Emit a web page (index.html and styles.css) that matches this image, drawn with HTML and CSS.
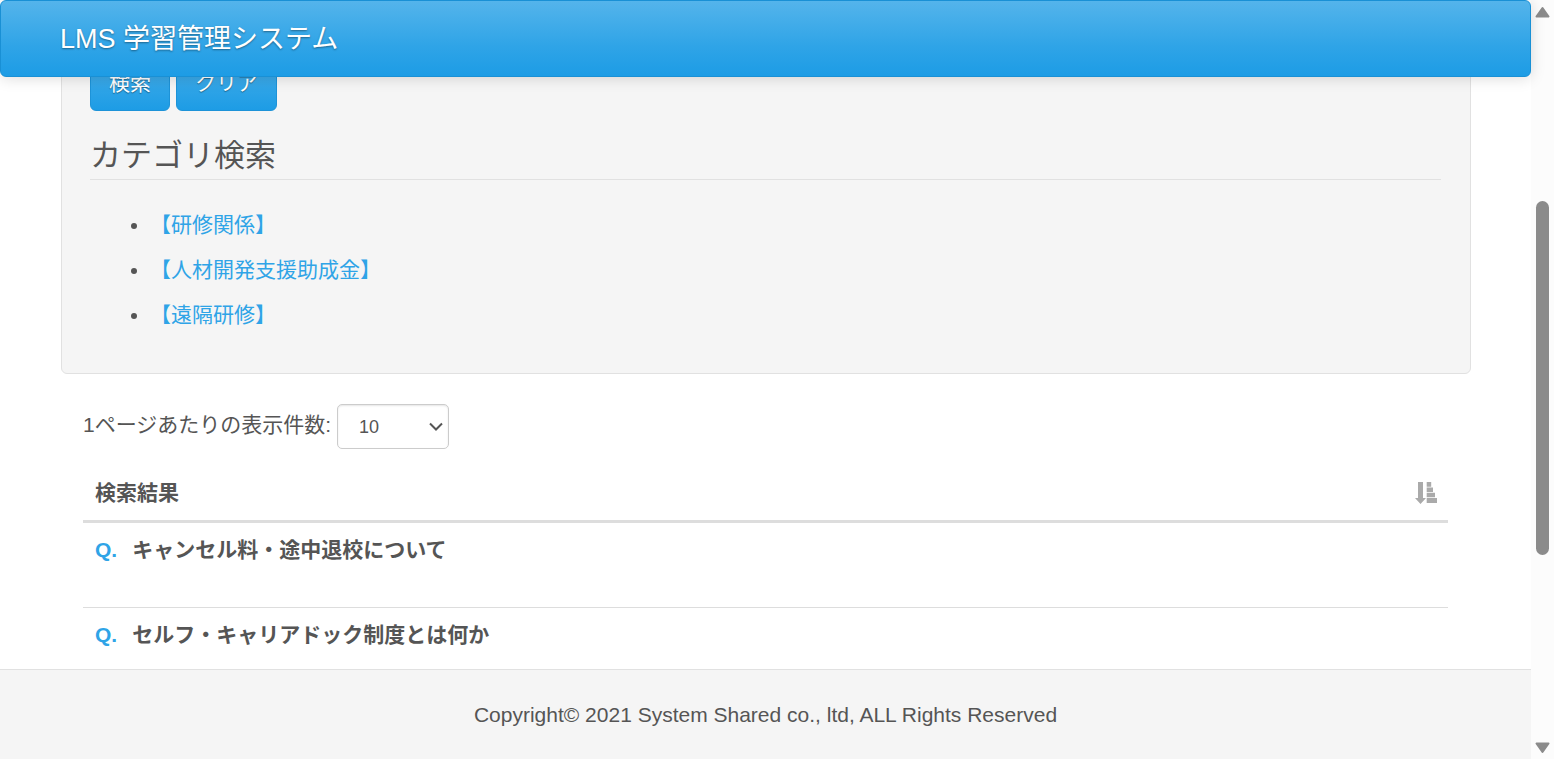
FILE: index.html
```html
<!DOCTYPE html>
<html lang="ja">
<head>
<meta charset="utf-8">
<title>LMS 学習管理システム</title>
<link rel="stylesheet" href="styles.css">
</head>
<body>
<div class="page">
  <header class="navbar"><a class="brand" href="#">LMS 学習管理システム</a></header>
  <main class="content">
    <section class="well">
      <div class="actions">
        <button class="btn" type="submit">検索</button>
        <button class="btn" type="reset">クリア</button>
      </div>
      <h2 class="legend">カテゴリ検索</h2>
      <ul class="categories">
        <li><a href="#">【研修関係】</a></li>
        <li><a href="#">【人材開発支援助成金】</a></li>
        <li><a href="#">【遠隔研修】</a></li>
      </ul>
    </section>
    <section class="results">
      <div class="length">
        <label for="page-size">1ページあたりの表示件数:</label>
        <div class="select-box">
          <select id="page-size" class="select">
            <option selected>10</option>
            <option>25</option>
            <option>50</option>
          </select>
          <svg class="chevron" viewBox="0 0 14 10" aria-hidden="true"><path d="M1 1.500L7 7.500 13 1.500"/></svg>
        </div>
      </div>
      <table class="table">
        <thead>
          <tr><th scope="col"><div class="heading"><span>検索結果</span>
            <svg class="sort" viewBox="0 0 22 22" aria-hidden="true"><path d="M3 0h5v16h3l-5.500 6L0 16h3zM11.700 0h4.500v4.800h-4.500zM11.700 5.500h6.300v4.500h-6.300zM11.700 10.700h8.300v4.500h-8.300zM11.700 16h10.300v5h-10.300z"/></svg>
          </div></th></tr>
        </thead>
        <tbody>
          <tr><td><span class="q">Q.</span>キャンセル料・途中退校について</td></tr>
          <tr><td><span class="q">Q.</span>セルフ・キャリアドック制度とは何か</td></tr>
        </tbody>
      </table>
    </section>
  </main>
  <footer class="footer">Copyright© 2021 System Shared co., ltd, ALL Rights Reserved</footer>
</div>
<div class="scrollbar" aria-hidden="true">
  <svg class="arrow" viewBox="0 0 15 12"><path d="M7.500 2L13.500 10.500H1.500z"/></svg>
  <div class="track"><div class="thumb"></div></div>
  <svg class="arrow" viewBox="0 0 15 12"><path d="M7.500 10L1.500 1.500h12z"/></svg>
</div>
</body>
</html>
```

FILE: styles.css
```css
* {
  box-sizing: border-box;
}

body {
  margin: 0;
  height: 100vh;
  display: flex;
  overflow: hidden;
  background: #fff;
  color: #555;
  font-family: "Liberation Sans", "Noto Sans CJK JP", sans-serif;
  font-size: 21px;
  line-height: 30px;
}

a {
  color: #2fa4e7;
  text-decoration: none;
}

.page {
  position: relative;
  flex: 1;
  min-width: 0;
  display: flex;
  flex-direction: column;
}

.navbar {
  position: absolute;
  top: 0;
  left: 0;
  right: 0;
  padding: 23px 59px 21px;
  border: 1px solid #1990d5;
  border-radius: 6px;
  background: linear-gradient(#54b4eb, #2fa4e7 60%, #1d9ce5);
  box-shadow: 0 1px 15px rgba(0, 0, 0, 0.15);
}

.brand {
  display: block;
  color: #fff;
  font-size: 27px;
  line-height: 31px;
  text-shadow: 0 1px 2px rgba(0, 0, 0, 0.4);
}

.content {
  flex: 1;
  min-height: 0;
  overflow: hidden;
  padding: 0 60px 0 61px;
}

.well {
  padding: 53px 29px 28px 28px;
  border: 1px solid #e1e1e1;
  border-radius: 6px;
  background: #f5f5f5;
}

.actions {
  display: flex;
  gap: 6px;
}

.btn {
  height: 57px;
  padding: 0 18px;
  border: 1px solid #1d93d8;
  border-radius: 6px;
  background: linear-gradient(#54b4eb, #2fa4e7 60%, #1d9ce5);
  color: #fff;
  font: inherit;
  line-height: 30px;
  text-shadow: 0 1px 1px rgba(0, 0, 0, 0.4);
}

.legend {
  margin: 22px 0 30px;
  border-bottom: 1px solid #e1e1e1;
  font-size: 31px;
  font-weight: 400;
  line-height: 46px;
}

.categories {
  margin: 0;
  padding: 0 0 0 60px;
}

.categories li {
  margin-bottom: 15px;
}

.results {
  padding: 30px 23px 0 22px;
}

.length {
  display: flex;
  align-items: flex-start;
  gap: 6px;
}

.length label {
  padding-top: 6px;
}

.select-box {
  position: relative;
}

.select {
  display: block;
  appearance: none;
  width: 112px;
  height: 45px;
  padding: 0 0 0 21px;
  border: 1px solid #ccc;
  border-radius: 5px;
  background: #fff;
  box-shadow: inset 0 1px 2px rgba(0, 0, 0, 0.1);
  color: #555;
  font: inherit;
  font-size: 18px;
}

.chevron {
  position: absolute;
  top: 18px;
  right: 6px;
  width: 14px;
  height: 10px;
  fill: none;
  stroke: #555;
  stroke-width: 2;
  pointer-events: none;
}

.table {
  width: 100%;
  margin-top: 17px;
  border-collapse: separate;
  border-spacing: 0;
  font-weight: 700;
  text-align: left;
}

.table th {
  padding: 12px 11px 12px 12px;
  border-bottom: 3px solid #ddd;
}

.heading {
  display: flex;
  align-items: center;
  justify-content: space-between;
}

.sort {
  width: 22px;
  height: 22px;
  fill: #aaa;
}

.table td {
  height: 85px;
  padding: 12px;
  border-bottom: 1px solid #ddd;
  vertical-align: top;
}

.q {
  margin-right: 15px;
  color: #2fa4e7;
}

.footer {
  padding: 30px 0 29px;
  border-top: 1px solid #e1e1e1;
  background: #f5f5f5;
  text-align: center;
}

.scrollbar {
  width: 23px;
  display: flex;
  flex-direction: column;
  align-items: center;
  padding: 6px 0 5px;
  background: #fcfcfc;
}

.arrow {
  width: 15px;
  height: 12px;
  fill: #8b8b8b;
  stroke: #8b8b8b;
  stroke-width: 2;
  stroke-linejoin: round;
}

.track {
  flex: 1;
  padding-top: 183px;
}

.thumb {
  width: 13px;
  height: 354px;
  border-radius: 7px;
  background: #8b8b8b;
}
```
